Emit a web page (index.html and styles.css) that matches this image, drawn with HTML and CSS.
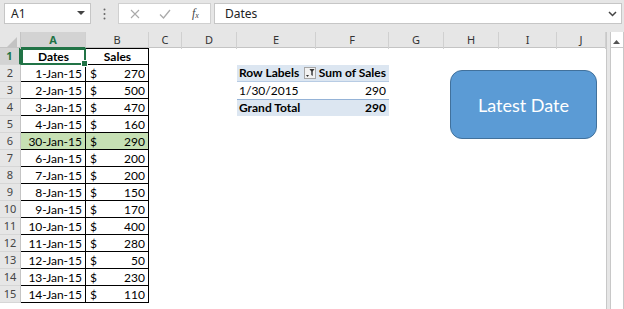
FILE: index.html
```html
<!DOCTYPE html>
<html lang="en">

<head>
    <meta charset="UTF-8">
    <title>Latest Date</title>
    <link rel="stylesheet" href="styles.css">
</head>

<body>
    <div class="toolbar">
        <div class="namebox">
            <span>A1</span>
            <svg width="8" height="5" viewBox="0 0 8 5"><path d="M0 0h8L4 4z" fill="#444"/></svg>
        </div>
        <div class="grip">
            <svg width="3" height="12" viewBox="0 0 3 12"><circle cx="1.5" cy="1.5" r="1" fill="#666"/><circle cx="1.5" cy="6" r="1" fill="#666"/><circle cx="1.5" cy="10.5" r="1" fill="#666"/></svg>
        </div>
        <div class="fxbox">
            <svg width="10" height="10" viewBox="0 0 10 10"><path d="M1 1l8 8M9 1l-8 8" stroke="#aaa" stroke-width="1.1"/></svg>
            <svg width="12" height="10" viewBox="0 0 12 10"><path d="M1 5.5l3.5 3.5L11 1" stroke="#aaa" stroke-width="1.3" fill="none"/></svg>
            <span class="fx">f<sub>x</sub></span>
        </div>
        <div class="formula">
            <span>Dates</span>
            <svg width="9" height="6" viewBox="0 0 9 6"><path d="M1 1l3.5 3.5L8 1" stroke="#444" stroke-width="1.5" fill="none"/></svg>
        </div>
    </div>

    <div class="sheet">
        <div class="main">
            <div class="heads">
                <div class="hd corner"></div>
                <div class="hd sel">A</div>
                <div class="hd">B</div>
                <div class="hd">C</div>
                <div class="hd">D</div>
                <div class="hd">E</div>
                <div class="hd">F</div>
                <div class="hd">G</div>
                <div class="hd">H</div>
                <div class="hd">I</div>
                <div class="hd">J</div>
            </div>

            <div class="grid">
                <div class="rh sel">1</div>
                <div class="c a top hdr active">Dates</div>
                <div class="c b top hdr">Sales</div>

                <div class="rh">2</div>
                <div class="c a">1-Jan-15</div>
                <div class="c b"><span>$</span><span>270</span></div>
                <div class="pv e phead">Row Labels <span class="filter"><svg width="9" height="8" viewBox="0 0 9 8"><path d="M0 6l1.5 2L3 6z" fill="#333"/><path d="M3.5 0h5L6.7 2.5V7l-1.4-1V2.5z" fill="#333"/></svg></span></div>
                <div class="pv f phead">Sum of Sales</div>

                <div class="rh">3</div>
                <div class="c a">2-Jan-15</div>
                <div class="c b"><span>$</span><span>500</span></div>
                <div class="pv e">1/30/2015</div>
                <div class="pv f">290</div>

                <div class="rh">4</div>
                <div class="c a">3-Jan-15</div>
                <div class="c b"><span>$</span><span>470</span></div>
                <div class="pv e ptotal">Grand Total</div>
                <div class="pv f ptotal">290</div>

                <div class="rh">5</div>
                <div class="c a">4-Jan-15</div>
                <div class="c b"><span>$</span><span>160</span></div>

                <div class="rh">6</div>
                <div class="c a hit">30-Jan-15</div>
                <div class="c b hit"><span>$</span><span>290</span></div>

                <div class="rh">7</div>
                <div class="c a">6-Jan-15</div>
                <div class="c b"><span>$</span><span>200</span></div>

                <div class="rh">8</div>
                <div class="c a">7-Jan-15</div>
                <div class="c b"><span>$</span><span>200</span></div>

                <div class="rh">9</div>
                <div class="c a">8-Jan-15</div>
                <div class="c b"><span>$</span><span>150</span></div>

                <div class="rh">10</div>
                <div class="c a">9-Jan-15</div>
                <div class="c b"><span>$</span><span>170</span></div>

                <div class="rh">11</div>
                <div class="c a">10-Jan-15</div>
                <div class="c b"><span>$</span><span>400</span></div>

                <div class="rh">12</div>
                <div class="c a">11-Jan-15</div>
                <div class="c b"><span>$</span><span>280</span></div>

                <div class="rh">13</div>
                <div class="c a">12-Jan-15</div>
                <div class="c b"><span>$</span><span>50</span></div>

                <div class="rh">14</div>
                <div class="c a">13-Jan-15</div>
                <div class="c b"><span>$</span><span>230</span></div>

                <div class="rh">15</div>
                <div class="c a">14-Jan-15</div>
                <div class="c b"><span>$</span><span>110</span></div>
            </div>

            <!-- shape floating over the sheet -->
            <div class="shape">Latest Date</div>
        </div>

        <div class="scroll">
            <div class="up">
                <svg width="7" height="4" viewBox="0 0 7 4"><path d="M0 4h7L3.5 0z" fill="#555"/></svg>
            </div>
        </div>
    </div>
</body>

</html>
```

FILE: styles.css
```css
* {
    box-sizing: border-box;
    margin: 0;
    padding: 0;
}

body {
    width: 624px;
    height: 309px;
    overflow: hidden;
    background: #fff;
    font-family: 'Lato', 'Liberation Sans', sans-serif;
}

/* formula bar */
.toolbar {
    height: 32px;
    background: #e6e6e6;
    display: flex;
    align-items: flex-start;
    padding: 3px 2px 0 4px;
}

.namebox {
    width: 87px;
    height: 21px;
    background: #fff;
    border: 1px solid #c6c6c6;
    display: flex;
    align-items: center;
    justify-content: space-between;
    padding: 0 5px 0 6px;
    font-family: 'Noto Sans', sans-serif;
    font-size: 12px;
    color: #222;
}

.grip {
    width: 27px;
    height: 21px;
    display: flex;
    align-items: center;
    justify-content: center;
}

.fxbox {
    width: 93px;
    height: 21px;
    background: #fff;
    border: 1px solid #d0d0d0;
    display: flex;
    align-items: center;
    padding: 0 6px 0 11px;
    gap: 19px;
}

.fx {
    font-family: 'Liberation Serif', serif;
    font-style: italic;
    font-size: 12px;
    color: #444;
    margin-left: 2px;
}

.fx sub {
    font-size: 8px;
    vertical-align: -1px;
}

.formula {
    margin-left: 3px;
    width: 408px;
    height: 21px;
    background: #fff;
    border: 1px solid #c6c6c6;
    display: flex;
    align-items: center;
    justify-content: space-between;
    padding: 0 4px 0 10px;
    font-family: 'Noto Sans', sans-serif;
    font-size: 12px;
    color: #222;
}

/* sheet */
.sheet {
    display: flex;
    height: 277px;
}

.main {
    position: relative;
    width: 607px;
    border-right: 1px solid #c8c8c8;
}

.heads,
.grid {
    display: grid;
    grid-template-columns: 21px 65px 63px 33px 55px 79px 73px 55px 55px 58px 49px;
}

.heads {
    height: 16px;
    background: #e6e6e6;
    border-bottom: 1px solid #c4c4c4;
}

.hd {
    border-right: 1px solid #d0d0d0;
    font-family: 'Noto Sans', sans-serif;
    font-size: 11px;
    line-height: 15px;
    text-align: center;
    color: #333;
}

.hd.sel {
    background: #d3d3d3;
    color: #217346;
    font-weight: bold;
    border-bottom: 2px solid #217346;
}

.corner {
    position: relative;
    border-right-color: #c4c4c4;
}

.corner::after {
    content: '';
    position: absolute;
    right: 3px;
    bottom: 2px;
    border-left: 10px solid transparent;
    border-bottom: 10px solid #c3c3c3;
}

.grid {
    grid-auto-rows: 17px;
    font-size: 12px;
    color: #000;
}

.rh {
    grid-column: 1;
    background: #e6e6e6;
    border-right: 1px solid #c4c4c4;
    border-bottom: 1px solid #d6d6d6;
    font-family: 'Noto Sans', sans-serif;
    font-size: 11px;
    line-height: 16px;
    text-align: center;
    color: #444;
}

.rh.sel {
    background: #d3d3d3;
    color: #217346;
    font-weight: bold;
    border-right: 2px solid #217346;
}

.c {
    border-right: 1px solid #000;
    border-bottom: 1px solid #000;
    line-height: 17px;
    padding: 0 3px;
    white-space: nowrap;
}

.a {
    grid-column: 2;
    text-align: right;
}

.b {
    grid-column: 3;
    display: flex;
    justify-content: space-between;
    padding-left: 4px;
}

.top {
    border-top: 1px solid #000;
    line-height: 15px;
}

.hdr {
    font-weight: bold;
    text-align: center;
    justify-content: center;
}

.active {
    position: relative;
    border: 2px solid #217346;
    line-height: 14px;
}

.active::after {
    content: '';
    position: absolute;
    right: -4px;
    bottom: -4px;
    width: 5px;
    height: 5px;
    background: #217346;
    border: 1px solid #fff;
}

.hit {
    background: #c6e0b4;
}

/* pivot table */
.pv {
    line-height: 17px;
    padding: 0 3px 0 2px;
    white-space: nowrap;
}

.e {
    grid-column: 6;
}

.f {
    grid-column: 7;
    text-align: right;
}

.phead {
    background: #dce6f1;
    font-weight: bold;
    border-bottom: 1px solid #b8cce4;
    line-height: 16px;
}

.phead.e {
    display: flex;
    align-items: center;
    justify-content: space-between;
    padding-right: 0;
}

.filter {
    width: 12px;
    height: 12px;
    background: #f2f2f2;
    border: 1px solid #a6a6a6;
    display: flex;
    align-items: center;
    justify-content: center;
}

.ptotal {
    background: #dce6f1;
    font-weight: bold;
    border-top: 1px solid #95b3d7;
    line-height: 15px;
}

.shape {
    position: absolute;
    left: 450px;
    top: 38px;
    width: 147px;
    height: 69px;
    background: #5b9bd5;
    border: 1px solid #41719c;
    border-radius: 12px;
    color: #fff;
    font-size: 18px;
    display: flex;
    align-items: center;
    justify-content: center;
}

/* vertical scroll bar */
.scroll {
    width: 17px;
    background: #fff;
    border-left: 3px solid #e6e6e6;
    border-right: 1px solid #c8c8c8;
    box-shadow: inset 1px 0 0 #c8c8c8;
    padding-top: 5px;
}

.up {
    height: 11px;
    display: flex;
    align-items: center;
    justify-content: center;
    border-bottom: 1px solid #c8c8c8;
}
```
